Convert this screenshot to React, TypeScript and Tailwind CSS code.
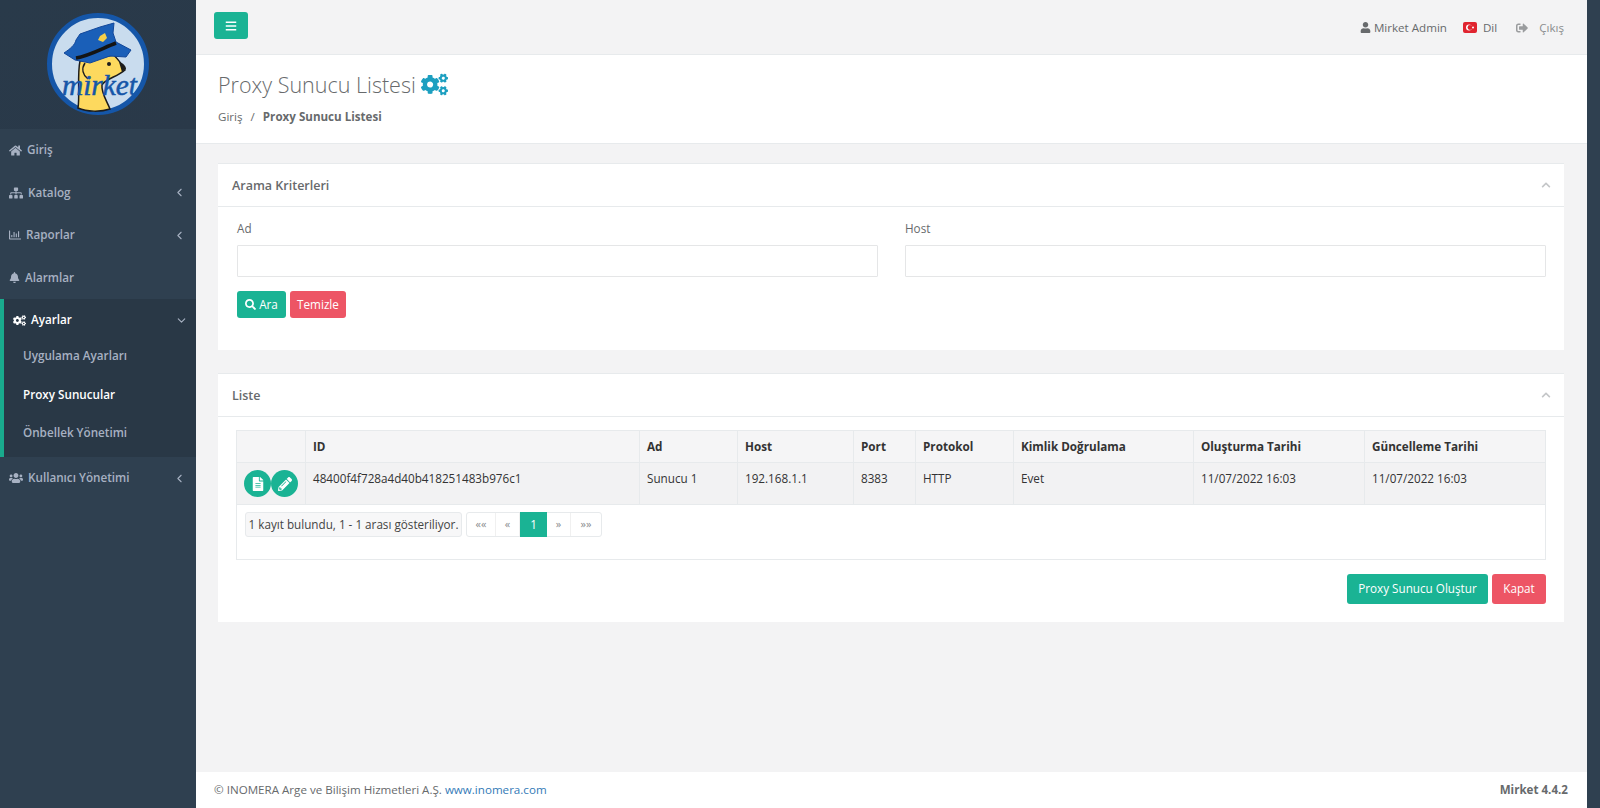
import { ChevronDown, ChevronLeft } from "lucide-react";
import { FaBars, FaBell, FaChevronUp, FaCogs, FaFileAlt, FaHome, FaPencilAlt, FaRegChartBar, FaSearch, FaSignOutAlt, FaSitemap, FaUser, FaUsers } from "react-icons/fa";

const columns = [
  { label: "", width: "w-[69px]" },
  { label: "ID", width: "w-[334px]" },
  { label: "Ad", width: "w-[98px]" },
  { label: "Host", width: "w-[116px]" },
  { label: "Port", width: "w-[62px]" },
  { label: "Protokol", width: "w-[98px]" },
  { label: "Kimlik Doğrulama", width: "w-[180px]" },
  { label: "Oluşturma Tarihi", width: "w-[171px]" },
  { label: "Güncelleme Tarihi", width: "w-[181px]" },
];

const row = ["48400f4f728a4d40b418251483b976c1", "Sunucu 1", "192.168.1.1", "8383", "HTTP", "Evet", "11/07/2022 16:03", "11/07/2022 16:03"];

function Logo() {
  return (
    <svg width="102" height="102" viewBox="0 0 102 102">
      <circle cx="51" cy="51" r="48.5" fill="#c9dcee" stroke="#1556a8" strokeWidth="5" />
      {/* mirket */}
      <path d="M33 48 C30 62 33 82 31 95 C40 99 54 99 63 96 C60 88 54 80 55 72 C58 66 70 64 78 57 C76 52 72 48 67 42 Z" fill="#fdd95e" stroke="#1c1c1c" strokeWidth="1.5" />
      <path d="M38 50 C34 56 36 62 41 66" fill="none" stroke="#1c1c1c" strokeWidth="1.5" />
      <circle cx="62" cy="51" r="2" fill="#1c1c1c" />
      <path d="M72 49 C76 50 79 53 79 56 L75 59 Z" fill="#1c1c1c" />
      {/* sapka */}
      <path d="M17 40 C23 36 28 32 29 27 L33 21 L53 14 L67 10 L66 20 L69 29 L84 37 L79 44 L63 43 L43 50 L28 47 Z" fill="#1a5fb8" stroke="#12479a" strokeWidth="1" strokeLinejoin="round" />
      <path d="M29 45 C42 43 56 35 69 30" fill="none" stroke="#141414" strokeWidth="3.5" />
      <path d="M53 23 L58 20 L60 25 L56 29 L51 27 Z" fill="#f5cf4a" />
      <text x="15" y="82" fontFamily="'Liberation Serif', serif" fontStyle="italic" fontSize="29" fill="#1556a8" stroke="#1556a8" strokeWidth="0.5" textLength="75" lengthAdjust="spacingAndGlyphs">mirket</text>
    </svg>
  );
}

function NavItem({ icon, label, arrow }: { icon: React.ReactNode; label: string; arrow?: boolean }) {
  return (
    <div className="h-[42.5px] flex items-center pl-[9px] pr-[10px] gap-[5px] text-[#a7b1c2] font-semibold">
      {icon}
      <span className="flex-1">{label}</span>
      {arrow && <ChevronLeft size={13} />}
    </div>
  );
}

function Sidebar() {
  return (
    <div className="w-[196px] shrink-0 text-[11.7px]">
      <div className="h-[129px] bg-gradient-to-br from-[#293a4a] to-[#2a3949] flex justify-center pt-[13px]">
        <Logo />
      </div>
      <div>
        <NavItem icon={<FaHome className="text-[13px]" />} label="Giriş" />
        <NavItem icon={<FaSitemap className="text-[14px]" />} label="Katalog" arrow />
        <NavItem icon={<FaRegChartBar className="text-[12px]" />} label="Raporlar" arrow />
        <NavItem icon={<FaBell className="text-[11px]" />} label="Alarmlar" />
        <div className="bg-[#293846] border-l-4 border-[#19aa8d] h-[158px] font-semibold">
          <div className="h-[42px] flex items-center pl-[9px] pr-[8px] gap-[5px] text-white">
            <FaCogs className="text-[13px]" />
            <span className="flex-1">Ayarlar</span>
            <ChevronDown size={13} className="text-[#a7b1c2]" />
          </div>
          <div className="-mt-[5px] h-[39px] flex items-center pl-[19px] text-[#a7b1c2]">Uygulama Ayarları</div>
          <div className="h-[39px] flex items-center pl-[19px] text-white">Proxy Sunucular</div>
          <div className="h-[38px] flex items-center pl-[19px] text-[#a7b1c2]">Önbellek Yönetimi</div>
        </div>
        <NavItem icon={<FaUsers className="text-[14px]" />} label="Kullanıcı Yönetimi" arrow />
      </div>
    </div>
  );
}

function Topbar() {
  return (
    <div className="h-[55px] border-b border-[#e7eaec] flex items-start justify-between pl-[18px] pr-[23px] pt-[12px]">
      <button className="w-[34px] h-[27px] bg-[#1ab394] rounded-[3px] flex items-center justify-center text-white">
        <FaBars className="text-[12px]" />
      </button>
      <div className="flex items-center pt-[7px] text-[11.6px] text-[#676a6c]">
        <FaUser className="text-[11px] mr-[3px]" />
        <span>Mirket Admin</span>
        <svg width="14" height="11" viewBox="0 0 14 11" className="ml-[16px] mr-[6px]">
          <rect width="14" height="11" rx="2" fill="#e0242f" />
          <circle cx="6" cy="5.5" r="3" fill="#fff" />
          <circle cx="7" cy="5.5" r="2.4" fill="#e0242f" />
          <circle cx="10" cy="5.5" r="1" fill="#fff" />
        </svg>
        <span>Dil</span>
        <FaSignOutAlt className="text-[12px] ml-[19px] mr-[11px] text-[#9a9c9e]" />
        <span className="text-[#8a8c8e]">Çıkış</span>
      </div>
    </div>
  );
}

function PageHeading() {
  return (
    <div className="h-[89px] bg-white border-b border-[#e7eaec] pl-[22px] pt-[13px]">
      <div className="flex items-center gap-[5px] h-[33px]">
        <h2 className="text-[21.5px] font-light text-[#676a6c] leading-none">Proxy Sunucu Listesi</h2>
        <FaCogs className="text-[27px] text-[#1c9fc0]" />
      </div>
      <div className="mt-[7px] text-[11.6px] text-[#676a6c]">
        Giriş <span className="mx-[5px]">/</span> <strong className="font-bold">Proxy Sunucu Listesi</strong>
      </div>
    </div>
  );
}

function PanelTitle({ title }: { title: string }) {
  return (
    <div className="h-[44px] border-t border-b border-[#e7eaec] flex items-center justify-between pl-[14px] pr-[13px] text-[#676a6c]">
      <h5 className="text-[12.5px] font-semibold pt-[2px]">{title}</h5>
      <FaChevronUp className="text-[10px] text-[#c4c6c8]" />
    </div>
  );
}

function Field({ label }: { label: string }) {
  return (
    <div className="flex-1">
      <label className="block text-[11.7px] text-[#676a6c] mb-[8px] -mt-px leading-[18px]">{label}</label>
      <input className="block w-full h-[32px] bg-white border border-[#e5e6e7] rounded-[1px]" />
    </div>
  );
}

function SearchPanel() {
  return (
    <div className="bg-white h-[187px]">
      <PanelTitle title="Arama Kriterleri" />
      <div className="pl-[19px] pr-[18px] pt-[13px]">
        <div className="flex gap-[27px]">
          <Field label="Ad" />
          <Field label="Host" />
        </div>
        <div className="flex gap-[4px] mt-[14px] text-[11.7px] text-white">
          <button className="h-[27px] w-[49px] bg-[#1ab394] rounded-[3px] flex items-center justify-center gap-[3px]">
            <FaSearch className="text-[11px]" /> Ara
          </button>
          <button className="h-[27px] w-[56px] bg-[#ed5565] rounded-[3px]">Temizle</button>
        </div>
      </div>
    </div>
  );
}

function Pagination() {
  const pages = [
    { label: "««", width: "w-[29px]" },
    { label: "«", width: "w-[24px]" },
    { label: "1", width: "w-[27px]", active: true },
    { label: "»", width: "w-[24px]" },
    { label: "»»", width: "w-[30px]" },
  ];
  return (
    <div className="h-[55px] border border-t-0 border-[#e7eaec] flex items-start pl-[8px] pt-[7px] gap-[4px]">
      <div className="h-[25px] w-[217px] whitespace-nowrap flex items-center justify-center bg-[#f7f7f8] border border-[#e7eaec] rounded-[3px] text-[#444]">
        1 kayıt bulundu, 1 - 1 arası gösteriliyor.
      </div>
      <div className="flex h-[25px] border border-[#e7eaec] rounded-[3px]">
        {pages.map((p) => (
          <div key={p.width + p.label} className={`${p.width} flex items-center justify-center ${p.active ? "bg-[#1ab394] text-white -my-px" : "text-[#8a8c8e] text-[11px] border-r border-[#f0f0f0] last:border-r-0"}`}>
            {p.label}
          </div>
        ))}
      </div>
    </div>
  );
}

function ListPanel() {
  return (
    <div className="bg-white h-[249px] mt-[23px]">
      <PanelTitle title="Liste" />
      <div className="px-[18px] pt-[13px] text-[11.7px] text-[#333]">
        <table className="table-fixed w-[1309px] border-collapse">
          <thead>
            <tr className="h-[32px] bg-[#f5f5f6] text-[#333]">
              {columns.map((c) => (
                <th key={c.label} className={`${c.width} border border-[#e7eaec] px-[7px] text-left font-bold`}>{c.label}</th>
              ))}
            </tr>
          </thead>
          <tbody>
            <tr className="h-[42px] bg-[#f2f2f3]">
              <td className="border border-[#e7eaec] pl-[7px]">
                <div className="flex">
                  <span className="w-[27px] h-[27px] rounded-full bg-[#1ab394] text-white flex items-center justify-center">
                    <FaFileAlt className="text-[14px]" />
                  </span>
                  <span className="w-[27px] h-[27px] rounded-full bg-[#1ab394] text-white flex items-center justify-center">
                    <FaPencilAlt className="text-[14px]" />
                  </span>
                </div>
              </td>
              {row.map((v, i) => (
                <td key={i} className="border border-[#e7eaec] px-[7px] pb-[10px]">{v}</td>
              ))}
            </tr>
          </tbody>
        </table>
        <Pagination />
        <div className="flex justify-end gap-[4px] mt-[14px] text-[11.7px] text-white">
          <button className="h-[30px] w-[141px] bg-[#1ab394] rounded-[3px]">Proxy Sunucu Oluştur</button>
          <button className="h-[30px] w-[54px] bg-[#ed5565] rounded-[3px]">Kapat</button>
        </div>
      </div>
    </div>
  );
}

export default function App() {
  return (
    <div className="w-full h-[808px] flex overflow-hidden bg-[#2f4050] font-['Open_Sans',sans-serif]">
      <Sidebar />
      <div className="w-[1391px] shrink-0 flex flex-col bg-[#f3f3f4]">
        <Topbar />
        <PageHeading />
        <div className="flex-1 pl-[22px] pr-[23px] pt-[19px]">
          <SearchPanel />
          <ListPanel />
        </div>
        <div className="h-[36px] bg-white flex items-center justify-between pl-[18px] pr-[19px] text-[11.6px] text-[#676a6c]">
          <div>© INOMERA Arge ve Bilişim Hizmetleri A.Ş. <a className="text-[#337ab7]">www.inomera.com</a></div>
          <strong className="font-bold">Mirket 4.4.2</strong>
        </div>
      </div>
    </div>
  );
}
